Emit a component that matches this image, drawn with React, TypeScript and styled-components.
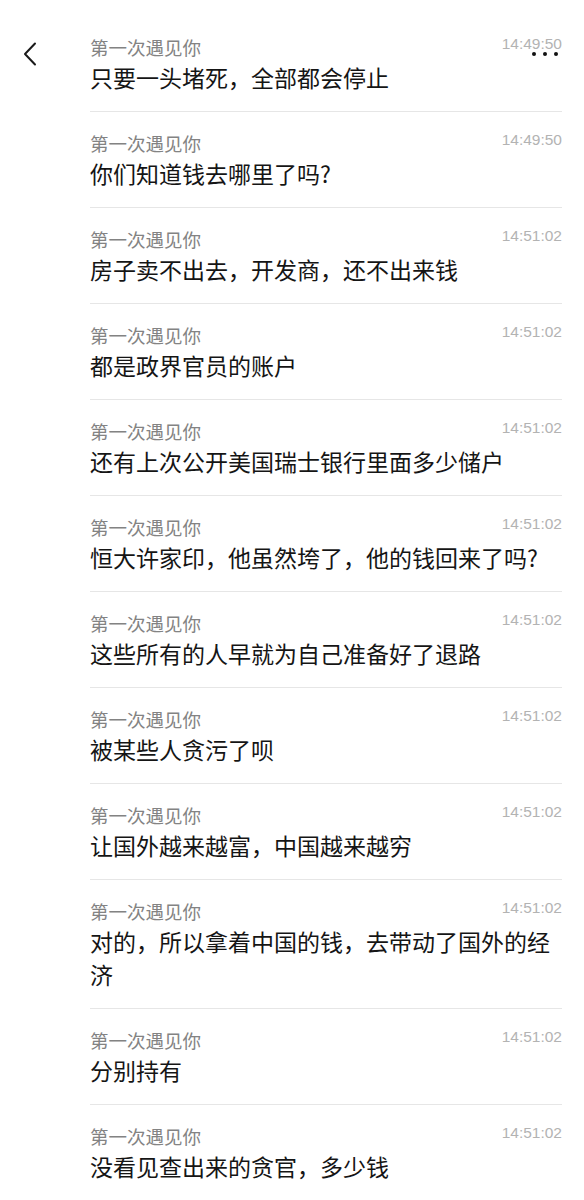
import React from 'react';
import styled, { createGlobalStyle } from 'styled-components';

const GlobalStyle = createGlobalStyle`
  html, body {
    margin: 0;
    padding: 0;
    background: #fff;
  }
  body {
    font-family: 'Noto Sans CJK SC', 'Noto Sans', sans-serif;
    -webkit-font-smoothing: antialiased;
  }
`;

const messages = [
  { time: '14:49:50', text: '只要一头堵死，全部都会停止' },
  { time: '14:49:50', text: '你们知道钱去哪里了吗?' },
  { time: '14:51:02', text: '房子卖不出去，开发商，还不出来钱' },
  { time: '14:51:02', text: '都是政界官员的账户' },
  { time: '14:51:02', text: '还有上次公开美国瑞士银行里面多少储户' },
  { time: '14:51:02', text: '恒大许家印，他虽然垮了，他的钱回来了吗?' },
  { time: '14:51:02', text: '这些所有的人早就为自己准备好了退路' },
  { time: '14:51:02', text: '被某些人贪污了呗' },
  { time: '14:51:02', text: '让国外越来越富，中国越来越穷' },
  { time: '14:51:02', text: '对的，所以拿着中国的钱，去带动了国外的经济' },
  { time: '14:51:02', text: '分别持有' },
  { time: '14:51:02', text: '没看见查出来的贪官，多少钱' },
];

const Page = styled.div`
  position: relative;
  width: 584px;
  height: 1200px;
  overflow: hidden;
  background: #fff;
`;

// top bar floats over the list (back arrow + more)
const TopBar = styled.div`
  position: absolute;
  top: 30px;
  left: 0;
  right: 0;
  height: 48px;
  display: flex;
  align-items: center;
  justify-content: space-between;
  padding: 0 22px 0 21px;
  pointer-events: none;
`;

const BackButton = styled.div`
  width: 18px;
  height: 26px;
  display: flex;
  align-items: center;
  justify-content: center;
`;

const MoreButton = styled.div`
  display: flex;
  gap: 6.5px;
  align-items: center;
  padding-right: 4px;
`;

const Dot = styled.span`
  width: 4.5px;
  height: 4.5px;
  border-radius: 50%;
  background: #111;
`;

const List = styled.div`
  padding: 16px 22px 0 90px;
`;

const Row = styled.div`
  padding: 19px 0 17px;
  border-bottom: 1px solid #e6e6e6;
`;

const RowHead = styled.div`
  display: flex;
  align-items: flex-start;
  justify-content: space-between;
`;

const Name = styled.div`
  font-size: 18.5px;
  line-height: 24px;
  color: #838383;
`;

const Time = styled.div`
  font-family: 'Liberation Sans', Arial, sans-serif;
  font-size: 15.5px;
  line-height: 20px;
  margin-top: -1px;
  color: #b3b3b3;
`;

const Text = styled.div`
  margin-top: 2px;
  font-size: 23px;
  line-height: 33px;
  color: #151515;
`;

export default function App() {
  return (
    <Page>
      <GlobalStyle />
      <TopBar>
        <BackButton>
          <svg width="14" height="24" viewBox="0 0 14 24" fill="none">
            <polyline
              points="12,1.5 2,12 12,22.5"
              stroke="#1a1a1a"
              strokeWidth="2"
              strokeLinecap="round"
              strokeLinejoin="round"
            />
          </svg>
        </BackButton>
        <MoreButton>
          <Dot />
          <Dot />
          <Dot />
        </MoreButton>
      </TopBar>
      <List>
        {messages.map((m, i) => (
          <Row key={i}>
            <RowHead>
              <Name>第一次遇见你</Name>
              <Time>{m.time}</Time>
            </RowHead>
            <Text>{m.text}</Text>
          </Row>
        ))}
      </List>
    </Page>
  );
}
